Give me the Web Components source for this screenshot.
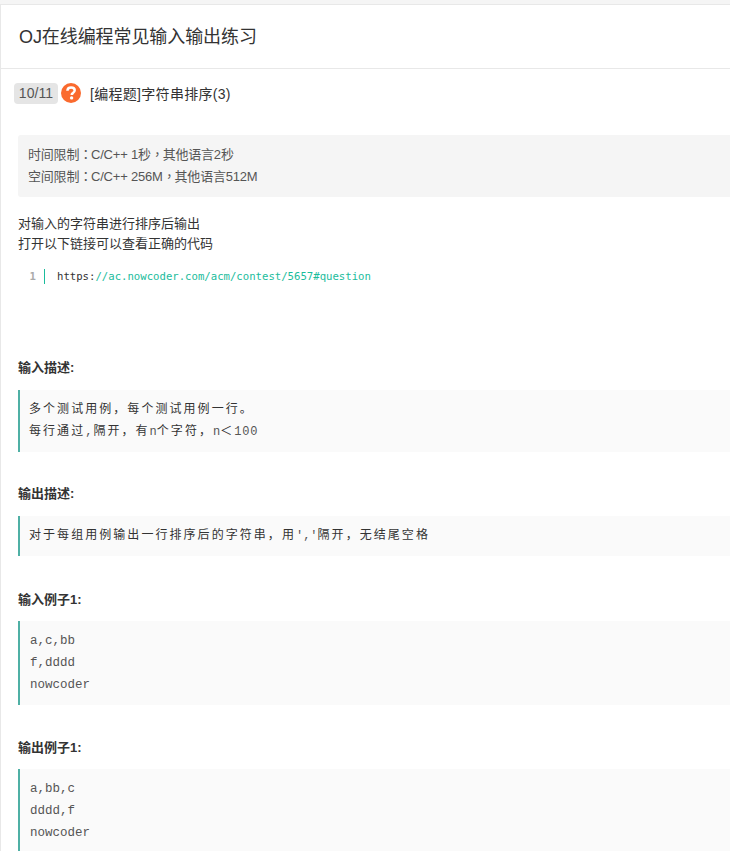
<!DOCTYPE html>
<html lang="zh"><head><meta charset="utf-8"><style>
html,body{margin:0;padding:0;background:#f5f5f5;height:851px;overflow:hidden}
body{font-family:"Liberation Sans","Noto Sans CJK SC",sans-serif;color:#333}
</style></head><body>
<oj-page>
<oj-header title-text="OJ在线编程常见输入输出练习"></oj-header>
<oj-question count="10/11">[编程题]字符串排序(3)</oj-question>
<oj-limits><div>时间限制<span class="p" lang="zh-Hant">：</span>C/C++ 1秒<span class="p" lang="zh-Hant">，</span>其他语言2秒</div><div>空间限制<span class="p" lang="zh-Hant">：</span>C/C++ 256M<span class="p" lang="zh-Hant">，</span>其他语言512M</div></oj-limits>
<oj-desc><div>对输入的字符串进行排序后输出</div><div>打开以下链接可以查看正确的代码</div></oj-desc>
<oj-code></oj-code>
<oj-section heading="输入描述:" top="72" gap="12"><div>多个测试用例，每个测试用例一行。</div><div>每行通过<span class="l w">,</span>隔开，有<span class="l z">n</span>个字符，<span class="l z">n</span>＜<span class="l">100</span></div></oj-section>
<oj-section heading="输出描述:" top="32" gap="12"><div>对于每组用例输出一行排序后的字符串，用<span class="l z">','</span>隔开，无结尾空格</div></oj-section>
<oj-section heading="输入例子1:" top="34" gap="11" mono><div>a,c,bb</div><div>f,dddd</div><div>nowcoder</div></oj-section>
<oj-section heading="输出例子1:" top="33" gap="11" mono><div>a,bb,c</div><div>dddd,f</div><div>nowcoder</div></oj-section>
</oj-page>
<script>
function def(name, html, init){
  customElements.define(name, class extends HTMLElement{
    constructor(){super();this.attachShadow({mode:'open'}).innerHTML=html;}
    connectedCallback(){ if(init) init(this,this.shadowRoot); }
  });
}
def('oj-page',`<style>:host{display:block;margin-top:4px;height:847px;overflow:hidden;background:#fff;border-top:1px solid #e8e8e8;border-left:1px solid #e8e8e8;box-sizing:border-box}</style><slot></slot>`);
def('oj-header',`<style>:host{display:flex;align-items:center;height:64px;box-sizing:border-box;border-bottom:1px solid #e8e8e8;padding:0 0 3px 18px;font-size:18px;letter-spacing:-.08px;color:#333}</style><span id="t"></span>`,
 (h,s)=>{s.getElementById('t').textContent=h.getAttribute('title-text')});
def('oj-question',`<style>:host{display:flex;align-items:center;height:20px;margin:14px 0 0 13px;font-size:14px;color:#333}
#b{background:#e5e5e5;border-radius:4px;height:21px;width:44px;display:flex;align-items:center;justify-content:center;color:#555;font-size:14px;letter-spacing:.1px}
svg{margin-left:3px;display:block}
#q{margin-left:9px;letter-spacing:.3px}</style><span id="b"></span><svg width="20" height="20" viewBox="0 0 20 20"><circle cx="10" cy="10" r="10" fill="#fa6a2e"/><path d="M6.4 7.7C6.5 5.6 8 4.4 10.1 4.4c2.1 0 3.6 1.2 3.6 2.9 0 1.3-.7 2-1.8 2.8-.9.6-1.2 1-1.2 1.9" fill="none" stroke="#fff" stroke-width="2.5"/><circle cx="10.6" cy="14.9" r="1.7" fill="#fff"/></svg><span id="q"><slot></slot></span>`,
 (h,s)=>{s.getElementById('b').textContent=h.getAttribute('count')});
def('oj-limits',`<style>:host{display:block;margin:32px 0 0 17px;padding:9px 0 9px 10px;background:#f5f5f5;border-radius:3px 0 0 3px;font-size:13px;line-height:22px;letter-spacing:-.2px;color:#555}</style><slot></slot>`);
def('oj-desc',`<style>:host{display:block;margin:17px 0 0 17px;font-size:13px;line-height:20px;color:#333}</style><slot></slot>`);
def('oj-code',`<style>:host{display:flex;margin:12px 0 0 17px;height:20px;align-items:center;font:10.65px "DejaVu Sans Mono",monospace}
#n{width:18px;text-align:right;color:#aaa;font-weight:bold;box-sizing:border-box}
#b{width:1px;height:15px;background:#1abc9c;margin-left:8px}
#c{margin-left:12px;color:#1abc9c;white-space:pre}#c b{font-weight:normal;color:#333}</style><span id="n">1</span><span id="b"></span><span id="c"><b>https:</b>//ac.nowcoder.com/acm/contest/5657#question</span>`);
def('oj-section',`<style>:host{display:block;margin-left:17px;color:#333}
h4{margin:0;font-size:13px;line-height:20px;font-weight:bold;color:#333}
#box{border-left:2px solid #4fb0a5;background:#fafafa;padding:8px 0 10px 9px;font-size:12px;line-height:22px;letter-spacing:2.05px;color:#333}
:host([mono]) #box{font:12.5px/22px "Liberation Mono","Noto Sans CJK SC",monospace;letter-spacing:0;color:#555;padding:9px 0 9px 10px}
</style><h4 id="h"></h4><div id="box"><slot></slot></div>`,
 (h,s)=>{s.getElementById('h').textContent=h.getAttribute('heading');
  h.style.marginTop=h.getAttribute('top')+'px';s.getElementById('box').style.marginTop=h.getAttribute('gap')+'px';});
document.querySelectorAll('.l').forEach(e=>{
  const ls=e.classList.contains('w')?'1px':e.classList.contains('z')?'0':'.8px';
  e.style.cssText='font-family:"Liberation Mono",monospace;letter-spacing:'+ls+';font-size:12px;line-height:1;color:#555'});
document.querySelectorAll('.p').forEach(e=>{e.style.cssText='font-family:"Noto Sans CJK TC",sans-serif;letter-spacing:-1.2px;line-height:1'});
</script>
</body></html>
